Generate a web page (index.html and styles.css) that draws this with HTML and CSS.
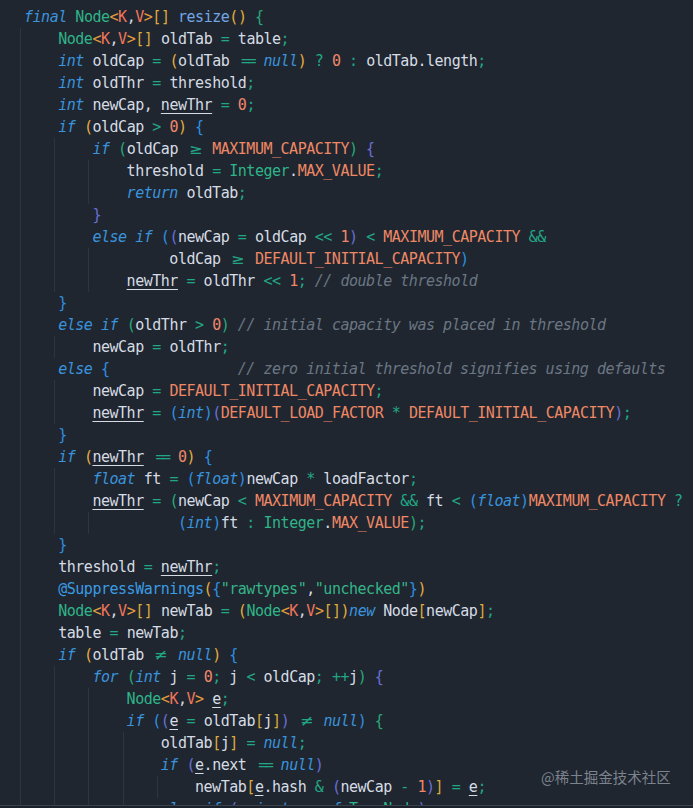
FILE: index.html
```html
<!DOCTYPE html>
<html lang="en">
<head>
<meta charset="utf-8">
<title>resize()</title>
<link rel="stylesheet" href="styles.css">
</head>
<body>
<div class="editor">
<div class="line"><span class="k">final</span> <span class="t">Node</span><span class="a">&lt;</span><span class="g">K</span>,<span class="g">V</span><span class="a">&gt;</span><span class="s">[]</span> <span class="fn">resize</span><span class="py">()</span> <span class="bgn">{</span></div>
<div class="line l1">    <span class="t">Node</span><span class="a">&lt;</span><span class="g">K</span>,<span class="g">V</span><span class="a">&gt;</span><span class="s">[]</span> oldTab <span class="o">=</span> table<span class="o">;</span></div>
<div class="line l1">    <span class="k">int</span> oldCap <span class="o">=</span> <span class="py">(</span>oldTab <span class="o eq">==</span> <span class="k">null</span><span class="py">)</span> <span class="o">?</span> <span class="n">0</span> <span class="o">:</span> oldTab.length<span class="o">;</span></div>
<div class="line l1">    <span class="k">int</span> oldThr <span class="o">=</span> threshold<span class="o">;</span></div>
<div class="line l1">    <span class="k">int</span> newCap, <span class="u">newThr</span> <span class="o">=</span> <span class="n">0</span><span class="o">;</span></div>
<div class="line l1">    <span class="k">if</span> <span class="py">(</span>oldCap <span class="o">&gt;</span> <span class="n">0</span><span class="py">)</span> <span class="bb">{</span></div>
<div class="line l2">        <span class="k">if</span> <span class="pg">(</span>oldCap <span class="o lig">≥</span> <span class="c">MAXIMUM_CAPACITY</span><span class="pg">)</span> <span class="bp">{</span></div>
<div class="line l3">            threshold <span class="o">=</span> <span class="t">Integer</span>.<span class="c">MAX_VALUE</span><span class="o">;</span></div>
<div class="line l3">            <span class="k">return</span> oldTab<span class="o">;</span></div>
<div class="line l2">        <span class="bp">}</span></div>
<div class="line l2">        <span class="k">else if</span> <span class="pb">(</span><span class="pp">(</span>newCap <span class="o">=</span> oldCap <span class="o">&lt;&lt;</span> <span class="n">1</span><span class="pp">)</span> <span class="o">&lt;</span> <span class="c">MAXIMUM_CAPACITY</span> <span class="o">&amp;&amp;</span></div>
<div class="line l3">                 oldCap <span class="o lig">≥</span> <span class="c">DEFAULT_INITIAL_CAPACITY</span><span class="pb">)</span></div>
<div class="line l3">            <span class="u">newThr</span> <span class="o">=</span> oldThr <span class="o">&lt;&lt;</span> <span class="n">1</span><span class="o">;</span> <span class="cm">// double threshold</span></div>
<div class="line l1">    <span class="bb">}</span></div>
<div class="line l1">    <span class="k">else if</span> <span class="pg">(</span>oldThr <span class="o">&gt;</span> <span class="n">0</span><span class="pg">)</span> <span class="cm">// initial capacity was placed in threshold</span></div>
<div class="line l2">        newCap <span class="o">=</span> oldThr<span class="o">;</span></div>
<div class="line l1">    <span class="k">else</span> <span class="bb">{</span>               <span class="cm">// zero initial threshold signifies using defaults</span></div>
<div class="line l2">        newCap <span class="o">=</span> <span class="c">DEFAULT_INITIAL_CAPACITY</span><span class="o">;</span></div>
<div class="line l2">        <span class="u">newThr</span> <span class="o">=</span> <span class="pb">(</span><span class="k">int</span><span class="pb">)</span><span class="pp">(</span><span class="c">DEFAULT_LOAD_FACTOR</span> <span class="o">*</span> <span class="c">DEFAULT_INITIAL_CAPACITY</span><span class="pp">)</span><span class="o">;</span></div>
<div class="line l1">    <span class="bb">}</span></div>
<div class="line l1">    <span class="k">if</span> <span class="py">(</span><span class="u">newThr</span> <span class="o eq">==</span> <span class="n">0</span><span class="py">)</span> <span class="bb">{</span></div>
<div class="line l2">        <span class="k">float</span> ft <span class="o">=</span> <span class="pb">(</span><span class="k">float</span><span class="pb">)</span>newCap <span class="o">*</span> loadFactor<span class="o">;</span></div>
<div class="line l2">        <span class="u">newThr</span> <span class="o">=</span> <span class="pg">(</span>newCap <span class="o">&lt;</span> <span class="c">MAXIMUM_CAPACITY</span> <span class="o">&amp;&amp;</span> ft <span class="o">&lt;</span> <span class="pb">(</span><span class="k">float</span><span class="pb">)</span><span class="c">MAXIMUM_CAPACITY</span> <span class="o">?</span></div>
<div class="line l3">                  <span class="pb">(</span><span class="k">int</span><span class="pb">)</span>ft <span class="o">:</span> <span class="t">Integer</span>.<span class="c">MAX_VALUE</span><span class="pg">)</span><span class="o">;</span></div>
<div class="line l1">    <span class="bb">}</span></div>
<div class="line l1">    threshold <span class="o">=</span> <span class="u">newThr</span><span class="o">;</span></div>
<div class="line l1">    <span class="an">@SuppressWarnings</span><span class="py">(</span><span class="bb">{</span><span class="st">"rawtypes"</span>,<span class="st">"unchecked"</span><span class="bb">}</span><span class="py">)</span></div>
<div class="line l1">    <span class="t">Node</span><span class="a">&lt;</span><span class="g">K</span>,<span class="g">V</span><span class="a">&gt;</span><span class="s">[]</span> newTab <span class="o">=</span> <span class="py">(</span><span class="t">Node</span><span class="a">&lt;</span><span class="g">K</span>,<span class="g">V</span><span class="a">&gt;</span><span class="s">[]</span><span class="py">)</span><span class="k">new</span> Node<span class="s">[</span>newCap<span class="s">]</span><span class="o">;</span></div>
<div class="line l1">    table <span class="o">=</span> newTab<span class="o">;</span></div>
<div class="line l1">    <span class="k">if</span> <span class="py">(</span>oldTab <span class="o lig">≠</span> <span class="k">null</span><span class="py">)</span> <span class="bb">{</span></div>
<div class="line l2">        <span class="k">for</span> <span class="pg">(</span><span class="k">int</span> j <span class="o">=</span> <span class="n">0</span><span class="o">;</span> j <span class="o">&lt;</span> oldCap<span class="o">;</span> <span class="o">++</span>j<span class="pg">)</span> <span class="bp">{</span></div>
<div class="line l3">            <span class="t">Node</span><span class="a">&lt;</span><span class="g">K</span>,<span class="g">V</span><span class="a">&gt;</span> <span class="u">e</span><span class="o">;</span></div>
<div class="line l3">            <span class="k">if</span> <span class="pb">(</span><span class="pp">(</span><span class="u">e</span> <span class="o">=</span> oldTab<span class="s">[</span>j<span class="s">]</span><span class="pp">)</span> <span class="o lig">≠</span> <span class="k">null</span><span class="pb">)</span> <span class="bgn">{</span></div>
<div class="line l4">                oldTab<span class="s">[</span>j<span class="s">]</span> <span class="o">=</span> <span class="k">null</span><span class="o">;</span></div>
<div class="line l4">                <span class="k">if</span> <span class="pp">(</span><span class="u">e</span>.next <span class="o eq">==</span> <span class="k">null</span><span class="pp">)</span></div>
<div class="line l5">                    newTab<span class="s">[</span><span class="u">e</span>.hash <span class="o">&amp;</span> <span class="pp">(</span>newCap <span class="o">-</span> <span class="n">1</span><span class="pp">)</span><span class="s">]</span> <span class="o">=</span> <span class="u">e</span><span class="o">;</span></div>
<div class="line l4">                <span class="k">else if</span> <span class="pp">(</span><span class="u">e</span> <span class="k">instanceof</span> <span class="t">TreeNode</span><span class="pp">)</span></div>
</div>
<div class="hscroll"></div>
<div class="wm">@稀土掘金技术社区</div>
</body>
</html>
```

FILE: styles.css
```css
html, body {
  margin: 0;
  padding: 0;
}
body {
  width: 693px;
  height: 808px;
  overflow: hidden;
  background: #1f2630;
  position: relative;
}
.editor {
  height: 805px;
  box-sizing: border-box;
  padding: 6px 0 0 20px;
  overflow: hidden;
  font-family: "DejaVu Sans Mono", "Liberation Mono", monospace;
  font-size: 15px;
  letter-spacing: -0.48px;
  line-height: 22px;
  color: #d6dce4;
}
.line {
  height: 22px;
  padding-left: 4px;
  white-space: pre;
  background-repeat: no-repeat;
  background-position: 0 0;
  background-image: repeating-linear-gradient(to right, #2d3540 0, #2d3540 1px, transparent 1px, transparent 34.2px);
  background-size: 0 100%;
}
.l1 { background-size: 34.2px 100%; }
.l2 { background-size: 68.4px 100%; }
.l3 { background-size: 102.6px 100%; }
.l4 { background-size: 136.8px 100%; }
.l5 { background-size: 171px 100%; }

.k { color: #3a93dc; font-style: italic; }
.t { color: #2fb488; }
.fn { color: #72a6e6; }
.o { color: #22a784; }
.n { color: #f0866a; }
.c { color: #ef8864; }
.a { color: #e59c3c; }
.g { color: #f2755b; }
.s { color: #dcaa3e; }
.cm { color: #6b7683; font-style: italic; }
.st { color: #35b487; }
.an { color: #3b9be3; }
.u { text-decoration: underline; text-underline-offset: 3px; text-decoration-thickness: 1px; }

.py { color: #e4ad3d; }
.pg { color: #2aa878; }
.pb { color: #2f8fe0; }
.pp { color: #6a6fd6; }
.bb { color: #2f8fe0; }
.bp { color: #6a6fd6; }
.bgn { color: #2aa878; }

.lig {
  display: inline-block;
  width: 17.1px;
  text-align: center;
  letter-spacing: 0;
  transform: scaleX(1.3);
}
.eq {
  display: inline-block;
  width: 17.1px;
  text-align: center;
  letter-spacing: -2.5px;
  text-indent: 2.5px;
}

.hscroll {
  height: 3px;
  box-sizing: border-box;
  border-top: 1px solid #3a424d;
  background: #1c222b;
}
.wm {
  position: absolute;
  left: 541px;
  top: 766px;
  font-family: "Noto Sans CJK SC", sans-serif;
  font-size: 14.5px;
  line-height: 22px;
  color: #7c838c;
  white-space: nowrap;
}
```
